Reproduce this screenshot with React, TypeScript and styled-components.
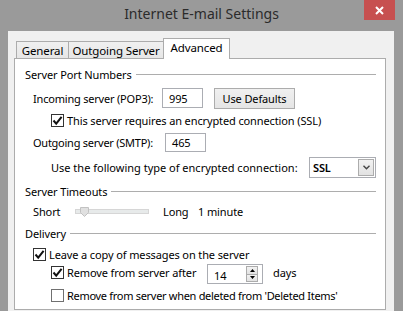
import React from "react";
import styled, { createGlobalStyle } from "styled-components";

const GlobalStyle = createGlobalStyle`
  html, body {
    margin: 0;
    padding: 0;
  }
  body {
    background: #9a9a9a;
    font-family: "Noto Sans", "Segoe UI", sans-serif;
    font-size: 11px;
    letter-spacing: -0.12px;
    color: #000;
  }
`;

const Window = styled.div`
  width: 403px;
  height: 311px;
  display: flex;
  flex-direction: column;
  background: #9a9a9a;
  overflow: hidden;
`;

const TitleBar = styled.div`
  height: 31px;
  display: grid;
  grid-template-columns: 1fr auto 1fr;
`;

const Title = styled.div`
  grid-column: 2;
  font-size: 14px;
  line-height: 28px;
  color: #2b2b2b;
  letter-spacing: 0;
`;

const CloseButton = styled.div`
  grid-column: 3;
  justify-self: end;
  margin-right: 8px;
  width: 31px;
  height: 20px;
  background: #c75050;
  display: flex;
  align-items: center;
  justify-content: center;
`;

const Body = styled.div`
  flex: 1;
  margin: 0 9px 0 8px;
  background: #f0f0f0;
  padding: 7px 8px 1px 6px;
  display: flex;
  flex-direction: column;
`;

const TabRow = styled.div`
  display: flex;
  align-items: flex-end;
  height: 20px;
  padding-left: 2px;
  position: relative;
  z-index: 1;
`;

const Tab = styled.div<{ $w: number; $active?: boolean }>`
  box-sizing: border-box;
  width: ${(p) => p.$w}px;
  height: ${(p) => (p.$active ? 21 : 17)}px;
  margin-right: -1px;
  margin-bottom: ${(p) => (p.$active ? -1 : 0)}px;
  border: 1px solid #acacac;
  border-bottom: none;
  background: ${(p) => (p.$active ? "#fff" : "linear-gradient(#f0f0f0, #e6e6e6)")};
  display: flex;
  align-items: center;
  justify-content: center;
  padding-bottom: ${(p) => (p.$active ? 3 : 0)}px;
  font-size: 11.5px;
`;

const Panel = styled.div`
  flex: 1;
  border: 1px solid #acacac;
  background: #fff;
  display: flex;
  flex-direction: column;
  padding: 0 9px 0 10px;
`;

const Row = styled.div<{ $mt: number; $h?: number; $indent?: number }>`
  display: flex;
  align-items: center;
  height: ${(p) => p.$h ?? 16}px;
  margin-top: ${(p) => p.$mt}px;
  padding-left: ${(p) => p.$indent ?? 0}px;
  white-space: nowrap;
`;

const Rule = styled.div`
  flex: 1;
  height: 1px;
  background: #adadad;
  margin-left: 4px;
`;

const Label = styled.span<{ $w?: number; $ls?: number }>`
  flex-shrink: 0;
  width: ${(p) => (p.$w ? `${p.$w}px` : "auto")};
  letter-spacing: ${(p) => p.$ls ?? -0.12}px;
`;

const Field = styled.div<{ $w: number; $h: number }>`
  box-sizing: border-box;
  width: ${(p) => p.$w}px;
  height: ${(p) => p.$h}px;
  border: 1px solid #abadb3;
  background: #fff;
  padding-left: 6px;
  display: flex;
  align-items: center;
`;

const Button = styled.div`
  box-sizing: border-box;
  width: 81px;
  height: 21px;
  margin-left: 11px;
  border: 1px solid #acacac;
  background: linear-gradient(#f0f0f0, #e5e5e5);
  display: flex;
  align-items: center;
  justify-content: center;
`;

const Box = styled.div<{ $checked?: boolean }>`
  box-sizing: border-box;
  width: 13px;
  height: 13px;
  border: 1px solid ${(p) => (p.$checked ? "#333" : "#707070")};
  background: #fff;
  margin-right: 3px;
  display: flex;
  align-items: center;
  justify-content: center;
  flex-shrink: 0;
`;

const Select = styled.div`
  box-sizing: border-box;
  width: 68px;
  height: 21px;
  border: 1px solid #abadb3;
  background: #fff;
  display: flex;
  align-items: center;
  padding-left: 3px;
`;

const SelectValue = styled.span`
  flex: 1;
  font-weight: 600;
`;

const DropButton = styled.div`
  box-sizing: border-box;
  width: 16px;
  height: 17px;
  margin-right: 1px;
  border: 1px solid #acacac;
  background: linear-gradient(#f2f2f2, #e2e2e2);
  display: flex;
  align-items: center;
  justify-content: center;
`;

const Track = styled.div`
  position: relative;
  box-sizing: border-box;
  width: 74px;
  height: 5px;
  margin-right: 14px;
  border: 1px solid #d6d6d6;
  background: #e7eaea;
`;

const Thumb = styled.svg`
  position: absolute;
  left: 4px;
  top: -3px;
`;

const Spinner = styled.div`
  box-sizing: border-box;
  width: 56px;
  height: 20px;
  margin: 4px 10px 0 0;
  border: 1px solid #abadb3;
  background: #fff;
  display: flex;
  align-items: center;
`;

const SpinValue = styled.span`
  flex: 1;
  padding-left: 6px;
  padding-top: 2px;
`;

const SpinButtons = styled.div`
  box-sizing: border-box;
  width: 12px;
  height: 16px;
  margin-right: 4px;
  border: 1px solid #acacac;
  display: flex;
  flex-direction: column;
`;

const SpinHalf = styled.div<{ $down?: boolean }>`
  flex: 1;
  display: flex;
  align-items: center;
  justify-content: center;
  background: linear-gradient(#f2f2f2, #e2e2e2);
  border-top: ${(p) => (p.$down ? "1px solid #acacac" : "none")};
`;

const Check = () => (
  <svg width="11" height="11" viewBox="0 0 11 11">
    <path d="M1.5 5.5 L4.2 8.6 L9.6 1.8" fill="none" stroke="#111" strokeWidth="2" />
  </svg>
);

const CheckBox: React.FC<{ checked?: boolean }> = ({ checked }) => (
  <Box $checked={checked}>{checked && <Check />}</Box>
);

const GroupHeader: React.FC<{ title: string; mt: number }> = ({ title, mt }) => (
  <Row $mt={mt}>
    <span>{title}</span>
    <Rule />
  </Row>
);

export default function App() {
  return (
    <>
      <GlobalStyle />
      <Window>
        <TitleBar>
          <Title>Internet E-mail Settings</Title>
          <CloseButton>
            <svg width="9" height="9" viewBox="0 0 9 9">
              <path d="M1 1 L8 8 M8 1 L1 8" stroke="#fff" strokeWidth="2" />
            </svg>
          </CloseButton>
        </TitleBar>

        <Body>
          <TabRow>
            <Tab $w={53}>General</Tab>
            <Tab $w={96}>Outgoing Server</Tab>
            <Tab $w={67} $active>
              Advanced
            </Tab>
          </TabRow>

          <Panel>
            <GroupHeader title="Server Port Numbers" mt={7} />

            <Row $mt={6} $h={20} $indent={8}>
              <Label $w={129} $ls={-0.2}>Incoming server (POP3):</Label>
              <Field $w={41} $h={20}>995</Field>
              <Button>Use Defaults</Button>
            </Row>

            <Row $mt={4} $indent={26}>
              <CheckBox checked />
              <span>This server requires an encrypted connection (SSL)</span>
            </Row>

            <Row $mt={4} $h={20} $indent={8}>
              <Label $w={132} $ls={-0.25}>Outgoing server (SMTP):</Label>
              <Field $w={41} $h={19}>465</Field>
            </Row>

            <Row $mt={4} $h={22} $indent={26}>
              <Label $w={258} $ls={0}>
                Use the following type of encrypted connection:
              </Label>
              <Select>
                <SelectValue>SSL</SelectValue>
                <DropButton>
                  <svg width="7" height="5" viewBox="0 0 7 5">
                    <path d="M0.5 0.8 L3.5 3.8 L6.5 0.8" fill="none" stroke="#444" strokeWidth="1.4" />
                  </svg>
                </DropButton>
              </Select>
            </Row>

            <GroupHeader title="Server Timeouts" mt={5} />

            <Row $mt={4} $indent={8}>
              <Label $w={42}>Short</Label>
              <Track>
                <Thumb width="9" height="10" viewBox="0 0 9 10">
                  <path d="M0.5 0.5 H8.5 V5.5 L4.5 9.5 L0.5 5.5 Z" fill="#e0e0e0" stroke="#c2c2c2" />
                </Thumb>
              </Track>
              <Label $w={35}>Long</Label>
              <span>1 minute</span>
            </Row>

            <GroupHeader title="Delivery" mt={6} />

            <Row $mt={5} $indent={8}>
              <CheckBox checked />
              <span>Leave a copy of messages on the server</span>
            </Row>

            <Row $mt={2} $indent={26}>
              <CheckBox checked />
              <Label $w={140}>Remove from server after</Label>
              <Spinner>
                <SpinValue>14</SpinValue>
                <SpinButtons>
                  <SpinHalf>
                    <svg width="5" height="3" viewBox="0 0 5 3">
                      <path d="M0 3 L2.5 0 L5 3 Z" fill="#000" />
                    </svg>
                  </SpinHalf>
                  <SpinHalf $down>
                    <svg width="5" height="3" viewBox="0 0 5 3">
                      <path d="M0 0 L2.5 3 L5 0 Z" fill="#000" />
                    </svg>
                  </SpinHalf>
                </SpinButtons>
              </Spinner>
              <span>days</span>
            </Row>

            <Row $mt={7} $indent={26}>
              <CheckBox />
              <Label $ls={-0.3}>Remove from server when deleted from 'Deleted Items'</Label>
            </Row>
          </Panel>
        </Body>
      </Window>
    </>
  );
}
